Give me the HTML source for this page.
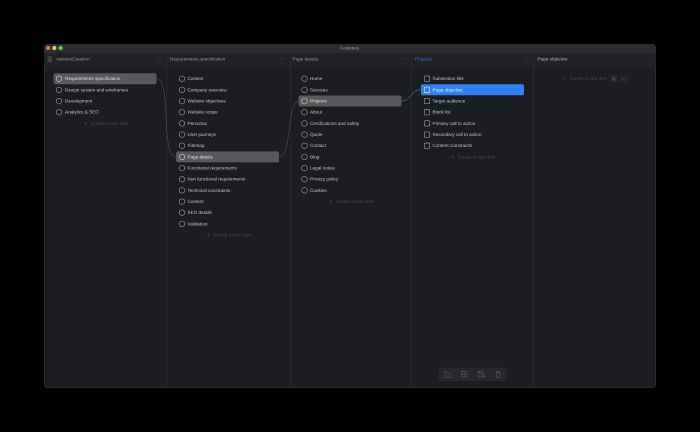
<!DOCTYPE html>
<html><head><meta charset="utf-8">
<style>
html,body{margin:0;padding:0;background:#000;width:700px;height:432px;overflow:hidden}
div{position:absolute;box-sizing:border-box}
#root{left:0;top:0;width:700px;height:432px;background:#000;filter:blur(.3px)}
#win{left:44px;top:43.7px;width:612px;height:344.6px;background:#1c1d20;border-radius:4px;overflow:hidden;box-shadow:inset 0 0 0 .5px #3a3b3e}
#tb{left:44px;top:43.7px;width:612px;height:9px;background:#2b2c2f;border-radius:4px 4px 0 0}
#hd{left:44px;top:52.7px;width:612px;height:13.500px;background:#212225;box-shadow:0 .5px 0 #2c2d30}
.sep{top:52.700px;width:.6px;height:335.500px;background:#28292c}
svg{position:absolute;left:0;top:0}
text{font-family:"Liberation Sans",sans-serif;font-size:4.620px;fill:#c4c5c7;text-rendering:geometricPrecision;white-space:pre}
.h{fill:#94959a}
.n{fill:#4b4c50}
.w{fill:#e2e2e3}
.d{fill:#6a6b6e;font-size:6px;letter-spacing:.2px}
.c{fill:none;stroke:#9a9b9d;stroke-width:.65}
.k{fill:none;stroke:#d2d2d3;stroke-width:.65}
.p{stroke:#4f5054;stroke-width:.6;fill:none}
.pl{font-size:6px}
</style></head><body>
<div id="root">
<div id="win"></div><div id="tb"></div><div id="hd"></div>
<div class="sep" style="left:165.500px"></div>
<div class="sep" style="left:289.700px"></div>
<div class="sep" style="left:410.500px"></div>
<div class="sep" style="left:533px"></div>
<svg width="700" height="432">
<circle cx="48" cy="48" r="2.200" fill="#ec6a5e"/>
<circle cx="54.300" cy="48" r="2.200" fill="#f4bf4f"/>
<circle cx="60.700" cy="48" r="2.200" fill="#61c554"/>
<text x="340" y="49.400" style="fill:#a5a6a8;font-size:4.500px">Colonnes</text>

<rect x="47.500" y="56" width="4.500" height="6" rx=".5" fill="#3e3f44"/>
<text class="h" x="56.500" y="60.500">websiteCreation</text>
<text class="d" x="156" y="60.500">···</text>
<text class="h" x="170" y="60.500">Requirements specification</text>
<text class="d" x="279.500" y="60.500">···</text>
<text class="h" x="292.500" y="60.500">Page details</text>
<text class="d" x="401.500" y="60.500">···</text>
<text class="h" x="415" y="60.500" style="fill:#2f7be8">Projects</text>
<text class="d" x="524" y="60.500">···</text>
<text class="h" x="537.500" y="60.500" style="fill:#b4b5b7">Page objective</text>
<text class="d" x="646.500" y="60.500">···</text>

<rect x="53.500" y="73.200" width="103" height="11" rx="2" fill="#59595b"/>
<rect x="176" y="151.400" width="103" height="11" rx="2" fill="#59595b"/>
<rect x="298.500" y="95.500" width="103" height="11" rx="2" fill="#59595b"/>
<rect x="421" y="84.300" width="103" height="11" rx="2" fill="#2f80f5"/>

<path class="p" d="M156.500 78.700C172 78.700 160 156.900 176 156.900"/>
<path class="p" d="M279 156.900C292 156.900 287 101 298.500 101"/>
<path class="p" d="M401.500 101C412 101 410 89.800 421 89.800" style="stroke:#47719f"/>

<!-- Column 1 -->
<circle class="k" cx="59" cy="78.700" r="2.800"/><text class="w" x="65" y="80.100">Requirements specification</text>
<circle class="c" cx="59" cy="89.900" r="2.800"/><text x="65" y="91.300">Design system and wireframes</text>
<circle class="c" cx="59" cy="101.100" r="2.800"/><text x="65" y="102.500">Development</text>
<circle class="c" cx="59" cy="112.200" r="2.800"/><text x="65" y="113.600">Analytics &amp; SEO</text>
<text class="n pl" x="84" y="125.300">+</text><text class="n" x="91" y="124.800">Create a new item</text>

<!-- Column 2 -->
<circle class="c" cx="182" cy="78.700" r="2.800"/><text x="187.500" y="80.100">Context</text>
<circle class="c" cx="182" cy="89.900" r="2.800"/><text x="187.500" y="91.300">Company overview</text>
<circle class="c" cx="182" cy="101.100" r="2.800"/><text x="187.500" y="102.500">Website objectives</text>
<circle class="c" cx="182" cy="112.200" r="2.800"/><text x="187.500" y="113.600">Website scope</text>
<circle class="c" cx="182" cy="123.400" r="2.800"/><text x="187.500" y="124.800">Personas</text>
<circle class="c" cx="182" cy="134.600" r="2.800"/><text x="187.500" y="136">User journeys</text>
<circle class="c" cx="182" cy="145.700" r="2.800"/><text x="187.500" y="147.100">Sitemap</text>
<circle class="k" cx="182" cy="156.900" r="2.800"/><text class="w" x="187.500" y="158.300">Page details</text>
<circle class="c" cx="182" cy="168.100" r="2.800"/><text x="187.500" y="169.500">Functional requirements</text>
<circle class="c" cx="182" cy="179.200" r="2.800"/><text x="187.500" y="180.600">Non functional requirements</text>
<circle class="c" cx="182" cy="190.400" r="2.800"/><text x="187.500" y="191.800">Technical constraints</text>
<circle class="c" cx="182" cy="201.600" r="2.800"/><text x="187.500" y="203">Content</text>
<circle class="c" cx="182" cy="212.700" r="2.800"/><text x="187.500" y="214.100">SEO details</text>
<circle class="c" cx="182" cy="223.900" r="2.800"/><text x="187.500" y="225.300">Validation</text>
<text class="n pl" x="206.500" y="237">+</text><text class="n" x="213.500" y="236.500">Create a new item</text>

<!-- Column 3 -->
<circle class="c" cx="304.500" cy="78.700" r="2.800"/><text x="310" y="80.100">Home</text>
<circle class="c" cx="304.500" cy="89.900" r="2.800"/><text x="310" y="91.300">Services</text>
<circle class="k" cx="304.500" cy="101.100" r="2.800"/><text class="w" x="310" y="102.500">Projects</text>
<circle class="c" cx="304.500" cy="112.200" r="2.800"/><text x="310" y="113.600">About</text>
<circle class="c" cx="304.500" cy="123.400" r="2.800"/><text x="310" y="124.800">Certifications and safety</text>
<circle class="c" cx="304.500" cy="134.600" r="2.800"/><text x="310" y="136">Quote</text>
<circle class="c" cx="304.500" cy="145.700" r="2.800"/><text x="310" y="147.100">Contact</text>
<circle class="c" cx="304.500" cy="156.900" r="2.800"/><text x="310" y="158.300">Blog</text>
<circle class="c" cx="304.500" cy="168.100" r="2.800"/><text x="310" y="169.500">Legal notice</text>
<circle class="c" cx="304.500" cy="179.200" r="2.800"/><text x="310" y="180.600">Privacy policy</text>
<circle class="c" cx="304.500" cy="190.400" r="2.800"/><text x="310" y="191.800">Cookies</text>
<text class="n pl" x="329" y="203.500">+</text><text class="n" x="336" y="203">Create a new item</text>

<!-- Column 4 -->
<rect class="c" x="424.300" y="76" width="5.400" height="5.400" rx="1"/><text x="432.500" y="80.100">Subsection title</text>
<rect class="c" x="424.300" y="87.100" width="5.400" height="5.400" rx="1" style="stroke:#dbe8fb"/><text x="432.500" y="91.300" style="fill:#e8f0fc">Page objective</text>
<rect class="c" x="424.300" y="98.300" width="5.400" height="5.400" rx="1"/><text x="432.500" y="102.500">Target audience</text>
<rect class="c" x="424.300" y="109.500" width="5.400" height="5.400" rx="1"/><text x="432.500" y="113.600">Block list</text>
<rect class="c" x="424.300" y="120.700" width="5.400" height="5.400" rx="1"/><text x="432.500" y="124.800">Primary call to action</text>
<rect class="c" x="424.300" y="131.900" width="5.400" height="5.400" rx="1"/><text x="432.500" y="136">Secondary call to action</text>
<rect class="c" x="424.300" y="143" width="5.400" height="5.400" rx="1"/><text x="432.500" y="147.100">Content constraints</text>
<text class="n pl" x="451" y="158.800">+</text><text class="n" x="458" y="158.300">Create a new item</text>

<!-- Column 5 -->
<text class="n pl" x="562" y="80.600">+</text><text class="n" x="570" y="80.100">Create a new item</text>
<rect x="610.500" y="75.200" width="7" height="7" rx="1" fill="#28292c"/>
<text x="611.800" y="80.300" style="font-size:4.200px;fill:#5f6063">⌘</text>
<rect x="619.500" y="75.200" width="9" height="7" rx="1" fill="#232428"/>
<text x="621.500" y="80.300" style="font-size:4.500px;fill:#5f6063">↵</text>

<!-- Toolbar -->
<rect x="438.500" y="367.500" width="68" height="13.500" rx="3" fill="#27282b"/>
<g fill="none" stroke="#55565a" stroke-width=".7">
<path d="M448 372h-3v5.500h5.500v-3M447.500 375l3-3"/>
<rect x="461.500" y="371.500" width="5.500" height="5.500" rx=".8"/><path d="M461.500 374.200h5.500M464.200 371.500v5.500"/>
<path d="M478.500 371.500h3.500l2 2v3.500h-5.500zM478.500 371.500l5.500 5.500"/>
<path d="M495.500 372.500h5M496.300 372.500v5h3.500v-5M497 372.500v-1h2v1"/>
</g>
</svg>
</div>
</body></html>
